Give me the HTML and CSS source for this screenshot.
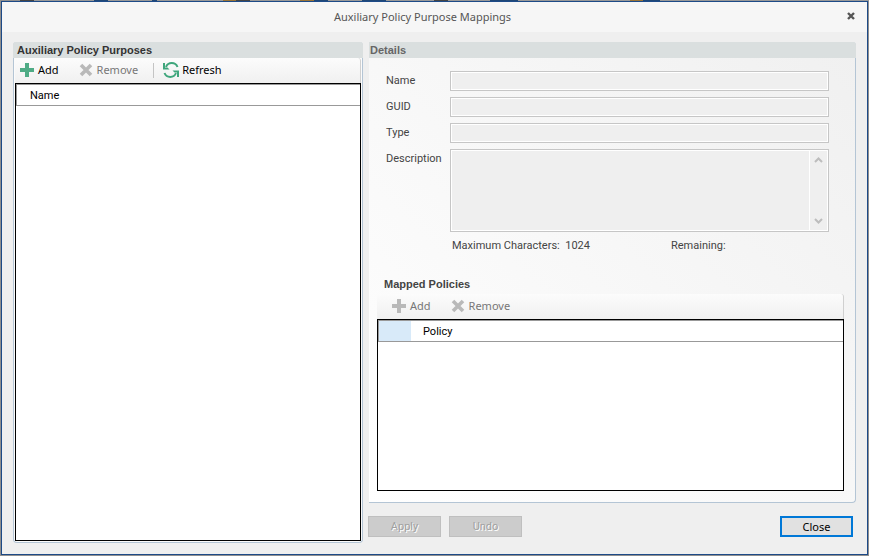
FILE: index.html
```html
<!DOCTYPE html>
<html lang="en">
<head>
    <meta charset="UTF-8">
    <meta name="viewport" content="width=device-width, initial-scale=1.0">
    <title>Auxiliary Policy Purpose Mappings</title>
    <link rel="stylesheet" href="styles.css">
</head>
<body>

    <div class="dialog" role="dialog" aria-labelledby="dialog-title">
        <header class="title-bar">
            <h1 id="dialog-title">Auxiliary Policy Purpose Mappings</h1>
            <button class="close-icon" type="button" aria-label="Close window">
                <svg width="8" height="8" viewBox="0 0 8 8"><path d="M1 1L7 7M7 1L1 7" stroke="#555" stroke-width="2.4"/></svg>
            </button>
        </header>

        <main class="content">
            <!-- Purposes list -->
            <section class="panel purposes">
                <h2>Auxiliary Policy Purposes</h2>
                <div class="toolbar">
                    <button type="button">
                        <svg width="14" height="14" viewBox="0 0 14 14"><path d="M5 0h4v5h5v4H9v5H5V9H0V5h5z" fill="#4fab85"/></svg>
                        Add
                    </button>
                    <button type="button" disabled>
                        <svg width="14" height="14" viewBox="0 0 14 14"><path d="M2 2L12 12M12 2L2 12" stroke="#b9b9b9" stroke-width="3.6"/></svg>
                        Remove
                    </button>
                    <span class="separator"></span>
                    <button class="refresh" type="button">
                        <svg width="16" height="16" viewBox="0 0 16 16">
                            <path d="M3 5A6.2 6.2 0 0 1 14.500 5M13 11A6.2 6.2 0 0 1 1.500 11" fill="none" stroke="#3fa67c" stroke-width="2"/>
                            <path d="M0 1v6.500h6.500L4.500 5.500H2V1zM16 15V8.500H9.500L11.500 10.500H14V15z" fill="#3fa67c"/>
                        </svg>
                        Refresh
                    </button>
                </div>
                <div class="grid-box">
                    <table>
                        <thead><tr><th>Name</th></tr></thead>
                        <tbody></tbody>
                    </table>
                </div>
            </section>

            <div class="right-side">
                <!-- Details -->
                <section class="panel details">
                    <h2>Details</h2>
                    <form class="fields">
                        <label for="name">Name</label>
                        <input id="name" type="text" disabled>
                        <label for="guid">GUID</label>
                        <input id="guid" type="text" disabled>
                        <label for="type">Type</label>
                        <input id="type" type="text" disabled>
                        <label for="description">Description</label>
                        <div class="description-box">
                            <textarea id="description" disabled></textarea>
                            <div class="scroll-track">
                                <svg width="9" height="6" viewBox="0 0 9 6"><path d="M1 5L4.500 1.500L8 5" fill="none" stroke="#bdbdbd" stroke-width="2"/></svg>
                                <svg width="9" height="6" viewBox="0 0 9 6"><path d="M1 1L4.500 4.500L8 1" fill="none" stroke="#bdbdbd" stroke-width="2"/></svg>
                            </div>
                        </div>
                        <div class="counts">
                            <span>Maximum Characters:&nbsp; 1024</span>
                            <span>Remaining:</span>
                        </div>
                    </form>

                    <div class="mapped">
                        <h3>Mapped Policies</h3>
                        <div class="toolbar">
                            <button type="button" disabled>
                                <svg width="14" height="14" viewBox="0 0 14 14"><path d="M5 0h4v5h5v4H9v5H5V9H0V5h5z" fill="#b9b9b9"/></svg>
                                Add
                            </button>
                            <button type="button" disabled>
                                <svg width="14" height="14" viewBox="0 0 14 14"><path d="M2 2L12 12M12 2L2 12" stroke="#b9b9b9" stroke-width="3.6"/></svg>
                                Remove
                            </button>
                        </div>
                        <div class="grid-box">
                            <table>
                                <thead><tr><td class="row-selector"></td><th>Policy</th></tr></thead>
                                <tbody></tbody>
                            </table>
                        </div>
                    </div>
                </section>

                <footer class="actions">
                    <button class="btn" type="button" disabled>Apply</button>
                    <button class="btn" type="button" disabled>Undo</button>
                    <button class="btn btn-default" type="button">Close</button>
                </footer>
            </div>
        </main>
    </div>

</body>
</html>
```

FILE: styles.css
```css
* { box-sizing: border-box; }
body {
    margin: 0;
    padding: 1px;
    min-height: 100vh;
    display: flex;
    background: #8f8f8f linear-gradient(90deg, #8f8f8f 0 20px, #444 20px 34px, #999 34px 94px, #1f4777 94px 108px, #999 108px 152px, #1f4777 152px 157px, #999 157px 223px, #9a7437 223px 236px, #444 236px 250px, #999 250px 300px, #9a7437 300px 314px, #1f4777 314px 328px, #999 328px 362px, #1f4777 362px 386px, #999 386px 434px, #444 434px 448px, #999 448px 490px, #1f4777 490px 518px, #999 518px 630px, #9a7437 630px 643px, #1f4777 643px 660px, #999 660px) top / 100% 1px no-repeat;
    font-family: Roboto, "Liberation Sans", sans-serif;
    font-size: 11px;
    line-height: 16px;
    color: #444;
}
h1, h2, h3 { margin: 0; font-size: 11px; }
svg { display: block; flex: none; }
button { font-family: inherit; font-size: 11px; line-height: 16px; color: #000; }

.dialog { flex: 1; display: flex; flex-direction: column; background-color: #efefef; border: 1px solid #1d4a87; }
.title-bar { display: flex; align-items: center; height: 30px; padding-right: 8px; background-color: #f6f6f6; }
.title-bar h1 { flex: 1; text-align: center; font-family: "Noto Sans", sans-serif; font-weight: normal; color: #555; }
.close-icon { padding: 3px 4px 5px; border: none; background: none; }

.content { flex: 1; display: grid; grid-template-columns: 350fr 487fr; gap: 6px; padding: 10px 11px 11px; }
.panel { display: flex; flex-direction: column; border: 1px solid #b4c5d5; border-top: none; border-radius: 4px; }
.panel h2 { height: 16px; margin: 0 -1px; padding-left: 4px; background-color: #dadfdf; border-radius: 3px 3px 0 0; font-family: "Liberation Sans", sans-serif; color: #333; }
.purposes { padding: 0 1px 1px; background-color: #fbfbfb; }
.purposes h2 { margin: 0 -2px; }

.toolbar { display: flex; align-items: center; height: 25px; background: linear-gradient(#fcfcfc, #f0f0f0); border-right: 1px solid #d0d0d0; border-radius: 0 3px 0 0; }
.toolbar button { display: flex; align-items: center; gap: 4px; padding: 0 5px 1px; border: none; background: none; font-family: "Noto Sans", sans-serif; }
.toolbar button + button { margin-left: 10px; }
.toolbar button:disabled { color: #777; }
.separator { width: 1px; height: 15px; margin: 0 4px 0 10px; background-color: #c4c4c4; }
.toolbar .refresh { gap: 3px; }

.grid-box { flex: 1; border: 1px solid #000; background-color: #fff; }
.grid-box table { width: 100%; border-collapse: separate; border-spacing: 0; }
.grid-box th, .grid-box td { height: 22px; padding: 2px 0 0; border: solid #999; border-width: 1px 0; }
.grid-box tr > :first-child { border-left-width: 1px; }
.grid-box th { padding-left: 13px; text-align: left; font-weight: normal; color: #000; }

.right-side { display: flex; flex-direction: column; }
.details { flex: 1; border-left: none; border-top-left-radius: 0; border-bottom-left-radius: 0; background: linear-gradient(45deg, #fff, #f0f0f0); }
.details h2 { margin-left: 0; padding-left: 1px; border-top-left-radius: 0; color: #666; }
.fields { display: grid; grid-template-columns: 58px 1fr; gap: 6px; padding: 13px 26px 0 17px; }
.fields label { padding-top: 2px; }
.fields input, .fields textarea { display: block; width: 100%; height: 20px; margin: 0; border: 1px solid #c6c6c6; border-radius: 0; background-color: #efefef; box-shadow: inset 0 0 0 1px #fff; font: inherit; }
.fields textarea { height: 83px; resize: none; }
.description-box { position: relative; }
.scroll-track { position: absolute; top: 2px; right: 2px; bottom: 2px; width: 18px; display: flex; flex-direction: column; align-items: center; justify-content: space-between; padding: 6px 0; border-left: 1px solid #fff; }
.counts { grid-column: 2; display: grid; grid-template-columns: 219px 1fr; padding-left: 2px; }

.mapped { flex: 1; display: flex; flex-direction: column; padding: 22px 11px 11px 8px; }
.mapped h3 { padding-left: 7px; margin-bottom: 2px; font-family: "Liberation Sans", sans-serif; }
.mapped .toolbar { padding-left: 10px; }
.mapped .row-selector { width: 33px; background: #d8eaf9 padding-box; }
.mapped th { padding-left: 12px; }

.actions { display: flex; gap: 8px; margin-left: -1px; padding: 13px 3px 6px 0; }
.btn { width: 73px; height: 21px; padding: 0; border: 1px solid #bfbfbf; background-color: #ccc; }
.btn:disabled { color: #a0a0a0; text-shadow: 1px 1px #fff; }
.btn-default { margin-left: auto; border: 2px solid #0078d7; background-color: #e1e1e1; font-family: "Noto Sans", sans-serif; }
```
